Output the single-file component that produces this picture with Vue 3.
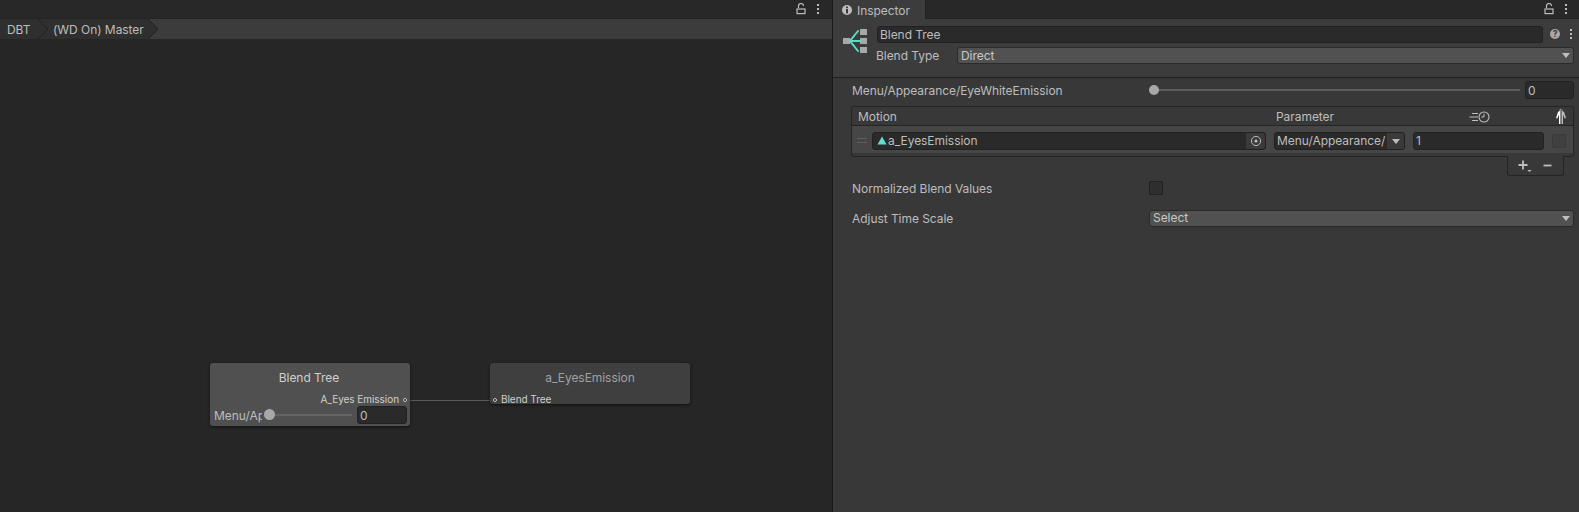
<script setup>
const row = { motion: 'a_EyesEmission', parameter: 'Menu/Appearance/', threshold: '1' }
</script>

<template>
  <div class="app">
    <section class="graph">
      <div class="tabbar">
        <svg width="12" height="12" viewBox="0 0 12 12"><path d="M3.5 5V3a2.5 2.5 0 0 1 5 0" fill="none" stroke="#bdbdbd" stroke-width="1.2"/><rect x="2" y="6" width="8" height="4.600" fill="none" stroke="#bdbdbd" stroke-width="1.2"/></svg>
        <span class="dots"><i></i><i></i><i></i></span>
      </div>
      <div class="crumbs">
        <div class="crumb-list">
          <span class="crumb first">DBT</span>
          <span class="crumb second">(WD On) Master</span>
        </div>
        <svg class="chev c1" width="11" height="20" viewBox="0 0 11 20"><path d="M0 0L10 10L0 20" fill="none" stroke="#1f1f1f"/></svg>
        <svg class="chev c2" width="11" height="20" viewBox="0 0 11 20"><path d="M0 0L10 10L0 20" fill="none" stroke="#1f1f1f"/></svg>
      </div>
      <div class="canvas">
        <div class="wire"></div>
        <div class="node n1">
          <div class="title shifted">Blend Tree</div>
          <div class="port-right">A_Eyes Emission</div>
          <i class="pin p1"></i>
          <div class="node-slider">
            <span class="clip">Menu/Appearance/EyeWhiteEmission</span>
            <div class="n-track"><b class="n-thumb"></b></div>
            <div class="field n-field">0</div>
          </div>
        </div>
        <div class="node n2">
          <div class="title dim">a_EyesEmission</div>
          <div class="port-left">Blend Tree</div>
          <i class="pin p2"></i>
        </div>
      </div>
    </section>

    <section class="inspector">
      <div class="insp-tabs">
        <div class="tab">
          <svg width="12" height="12" viewBox="0 0 12 12"><circle cx="6" cy="6" r="5" fill="#bdbdbd"/><rect x="5" y="5" width="2" height="4.400" fill="#383838"/><rect x="5" y="2.600" width="2" height="1.600" fill="#383838"/></svg>
          <span>Inspector</span>
        </div>
        <div class="tab-tools">
          <svg width="12" height="12" viewBox="0 0 12 12"><path d="M3.5 5V3a2.5 2.5 0 0 1 5 0" fill="none" stroke="#bdbdbd" stroke-width="1.2"/><rect x="2" y="6" width="8" height="4.600" fill="none" stroke="#bdbdbd" stroke-width="1.2"/></svg>
          <span class="dots"><i></i><i></i><i></i></span>
        </div>
      </div>
      <header class="asset">
        <svg class="tree" width="28" height="28" viewBox="0 0 28 28">
          <rect x="1" y="12" width="7" height="6" fill="#a8a8a8"/>
          <rect x="18" y="3" width="7" height="6" fill="#a8a8a8"/>
          <rect x="18" y="12" width="7" height="6" fill="#a8a8a8"/>
          <rect x="18" y="21" width="7" height="6" fill="#a8a8a8"/>
          <path d="M16 5L8 15L16 25M8 15H19" fill="none" stroke="#5cdcc6" stroke-width="2" stroke-linecap="round"/>
        </svg>
        <div class="asset-fields">
          <div class="asset-name">
            <div class="field name">Blend Tree</div>
            <svg class="help" width="12" height="12" viewBox="0 0 12 12"><circle cx="6" cy="6" r="5" fill="#a8a8a8"/><text x="6" y="9" text-anchor="middle" font-size="8.500" font-weight="700" font-family="Inter" fill="#383838">?</text></svg>
            <span class="dots"><i></i><i></i><i></i></span>
          </div>
          <div class="asset-type">
            <span class="type-label">Blend Type</span>
            <div class="drop">Direct<i class="arrow"></i></div>
          </div>
        </div>
      </header>
      <div class="body">
        <div class="prop param">
          <span class="lbl">Menu/Appearance/EyeWhiteEmission</span>
          <div class="track"><b class="thumb"></b></div>
          <div class="field val">0</div>
        </div>

        <div class="table">
          <div class="thead">
            <span class="h-motion">Motion</span>
            <span class="h-param">Parameter</span>
            <svg class="h-time" width="21" height="14" viewBox="0 0 21 14"><path d="M3 3.500h6M.5 7h8.500M3 10.500h6" stroke="#bdbdbd"/><circle cx="15" cy="7" r="5" fill="none" stroke="#bdbdbd" stroke-width="1.100"/><path d="M15 3.800V7H12.400" fill="none" stroke="#bdbdbd"/></svg>
            <svg class="h-man" width="14" height="16" viewBox="0 0 14 16"><path d="M7 .5C6 .5 5.500 1.500 5.800 2.700L4 4L2 10L3.300 10.400L5 6.500V16H7z" fill="#ffffff"/><path d="M7 .5C8 .5 8.500 1.500 8.200 2.700L10 4L12 10L10.700 10.400L9 6.500V16H7z" fill="#c0c0c0"/><path d="M7 0v16" stroke="#1c1c1c"/></svg>
          </div>
          <div class="trow">
            <span class="grip"></span>
            <div class="field motion">
              <svg width="10" height="9" viewBox="0 0 10 9"><path d="M5 .5L9.500 8.500H.5z" fill="#5fe0cc"/></svg>
              <span>{{ row.motion }}</span>
              <span class="pick"><svg width="12" height="12" viewBox="0 0 12 12"><circle cx="6" cy="6" r="4.600" fill="none" stroke="#bdbdbd"/><circle cx="6" cy="6" r="1.600" fill="#bdbdbd"/></svg></span>
            </div>
            <div class="field select"><span>{{ row.parameter }}</span><em><i class="arrow"></i></em></div>
            <div class="field thr">{{ row.threshold }}</div>
            <span class="check small"></span>
          </div>
        </div>
        <div class="footer-wrap">
          <div class="addrem">
            <svg width="14" height="14" viewBox="0 0 14 14"><path d="M5 1.500v9M.5 6h9" stroke="#bdbdbd" stroke-width="1.800"/><path d="M9.500 11h4l-2 2z" fill="#bdbdbd"/></svg>
            <svg width="12" height="14" viewBox="0 0 12 14"><path d="M1.500 6.500h8" stroke="#bdbdbd" stroke-width="1.800"/></svg>
          </div>
        </div>

        <div class="prop norm">
          <span class="lbl">Normalized Blend Values</span>
          <span class="check box"></span>
        </div>
        <div class="prop adjust">
          <span class="lbl">Adjust Time Scale</span>
          <div class="drop wide">Select<i class="arrow"></i></div>
        </div>
      </div>
    </section>
  </div>
</template>

<style>
html, body { margin: 0; background: #262626; overflow: hidden; }
</style>

<style scoped>
.app {
  display: flex; width: 1579px; height: 512px; overflow: hidden;
  font-family: Inter, "Liberation Sans", sans-serif; font-size: 12px; color: #bdbdbd; letter-spacing: -.05px;
}
.graph { width: 832px; display: flex; flex-direction: column; background: #262626; border-right: 1px solid #191919; box-sizing: content-box; }
.tabbar { height: 18px; background: #282828; border-bottom: 1px solid #232323; display: flex; justify-content: flex-end; align-items: center; gap: 10px; padding-right: 12px; }
.dots { display: inline-flex; flex-direction: column; gap: 2px; width: 3px; }
.dots i { width: 2px; height: 2px; background: #bdbdbd; display: block; }
.crumbs { height: 20px; background: #3c3c3c; position: relative; }
.crumb-list { width: 160px; height: 20px; background: #2f2f2f; display: flex; align-items: center; padding-top: 1px; box-sizing: border-box; clip-path: polygon(0 0, 148px 0, 158px 50%, 148px 100%, 0 100%); }
.chev { position: absolute; top: 0; }
.c1 { left: 38px; }
.c2 { left: 148px; }
.crumb { white-space: nowrap; }
.crumb.first { padding-left: 7px; width: 46px; }
.canvas { position: relative; flex: 1; }
.wire { position: absolute; left: 410px; top: 361px; width: 81px; height: 1px; background: #5a5a5a; }
.node { position: absolute; box-sizing: border-box; width: 200px; top: 324px; border-radius: 3px; box-shadow: 0 1px 3px #111; }
.n1 { left: 210px; height: 63px; background: #505050; }
.n2 { left: 490px; height: 41px; background: #3f3f3f; }
.title { text-align: center; line-height: 14px; padding-top: 8px; color: #cfcfcf; }
.title.shifted { padding-right: 2px; }
.title.dim { color: #a0a0a0; }
.port-right, .port-left { position: absolute; top: 30px; font-size: 10px; line-height: 13px; color: #cfcfcf; }
.port-right { right: 11px; }
.port-left { left: 11px; }
.pin { position: absolute; top: 35px; width: 2px; height: 2px; border-radius: 50%; background: #111; border: 1px solid #cfcfcf; box-sizing: content-box; }
.p1 { right: 3px; }
.p2 { left: 3px; }
.node-slider { position: absolute; left: 4px; right: 3px; bottom: 2px; height: 18px; display: flex; align-items: center; }
.clip { width: 48px; overflow: hidden; white-space: nowrap; flex: none; }
.n-track { flex: 1; height: 2px; background: #646464; position: relative; margin: 0 5px 0 2px; }
.n-thumb { position: absolute; left: 0; top: -5px; width: 11px; height: 11px; border-radius: 50%; background: #a8a8a8; }
.field { box-sizing: border-box; background: #2a2a2a; border: 1px solid #212121; border-radius: 3px; display: flex; align-items: center; padding-left: 2px; }
.n-field { width: 50px; height: 18px; flex: none; }
.inspector { flex: 1; background: #383838; display: flex; flex-direction: column; min-width: 0; }
.insp-tabs { height: 19px; background: #282828; display: flex; justify-content: space-between; box-sizing: border-box; border-bottom: 1px solid #232323; }
.tab { width: 93px; height: 19px; background: #3c3c3c; border-right: 1px solid #222; display: flex; align-items: center; gap: 4px; padding: 1px 0 0 8px; box-sizing: border-box; }
.tab-tools { display: flex; align-items: center; gap: 10px; padding-right: 11px; }
.asset { height: 59px; box-sizing: border-box; background: #3c3c3c; border-bottom: 1px solid #1f1f1f; display: flex; padding: 6px 5px 0 9px; }
.tree { margin-top: 1px; flex: none; margin-right: 7px; }
.asset-fields { flex: 1; min-width: 0; }
.asset-name { display: flex; align-items: center; height: 18px; padding-right: 1px; }
.name { flex: 1; }
.help { margin: 0 9px 0 6px; }
.asset-type { display: flex; align-items: center; margin-top: 4px; height: 17px; }
.type-label { width: 81px; flex: none; margin-left: -1px; }
.drop { flex: 1; position: relative; box-sizing: border-box; height: 17px; line-height: 15px; background: #515151; border: 1px solid #2a2a2a; border-radius: 3px; padding-left: 3px; color: #c8c8c8; }
.arrow { display: block; width: 0; height: 0; border-left: 4px solid transparent; border-right: 4px solid transparent; border-top: 5px solid #bdbdbd; }
.drop .arrow { position: absolute; right: 3px; top: 5px; }
.body { flex: 1; padding: 0 5px 0 19px; }
.prop { display: flex; align-items: center; }
.lbl { width: 298px; flex: none; white-space: nowrap; }
.param { height: 18px; margin-top: 3px; }
.track { width: 370px; height: 2px; background: #5e5e5e; position: relative; }
.thumb { position: absolute; left: -1px; top: -4px; width: 10px; height: 10px; border-radius: 50%; background: #a8a8a8; }
.val { width: 49px; height: 18px; margin-left: auto; }
.table { box-sizing: border-box; margin: 7px 0 0 -1px; height: 51px; background: #383838; border: 1px solid #242424; border-radius: 3px; }
.thead { height: 19px; box-sizing: border-box; border-bottom: 1px solid #242424; position: relative; line-height: 19px; }
.h-motion { position: absolute; left: 6px; }
.h-param { position: absolute; left: 424px; }
.h-time { position: absolute; left: 617px; top: 3px; }
.h-man { position: absolute; left: 702px; top: 1px; }
.trow { height: 27px; box-sizing: border-box; background: #464646; display: flex; align-items: flex-start; padding: 6px 0 0 5px; }
.grip { width: 10px; height: 3px; border-top: 1px solid #5f5f5f; border-bottom: 1px solid #5f5f5f; flex: none; margin: 6px 5px 0 0; }
.motion { width: 394px; height: 18px; gap: 1px; position: relative; flex: none; padding: 0 0 1px 4px; }
.pick { position: absolute; right: 0; top: 0; bottom: 0; width: 19px; background: #3a3a3a; border-radius: 0 3px 3px 0; display: flex; align-items: center; justify-content: center; }
.select { width: 131px; height: 18px; margin-left: 8px; flex: none; position: relative; overflow: hidden; white-space: nowrap; padding-bottom: 1px; }
.select em { position: absolute; right: 0; top: 0; bottom: 0; width: 17px; background: #3a3a3a; display: flex; align-items: center; justify-content: center; }
.thr { width: 131px; height: 18px; margin-left: 8px; flex: none; padding-bottom: 1px; }
.check { display: block; box-sizing: border-box; width: 14px; height: 14px; background: #2e2e2e; border: 1px solid #222; border-radius: 2px; }
.check.small { background: #404040; border-color: #3a3a3a; margin: 2px 0 0 8px; }
.check.box { margin-left: -1px; }
.footer-wrap { display: flex; justify-content: flex-end; padding-right: 10px; }
.addrem { box-sizing: border-box; width: 57px; height: 20px; margin-top: -1px; background: #383838; border: 1px solid #242424; border-top: 0; border-radius: 0 0 3px 3px; display: flex; align-items: center; justify-content: center; gap: 10px; }
.norm { margin-top: 5px; height: 14px; }
.adjust { margin-top: 15px; height: 17px; }
.wide { flex: 1; margin-left: -1px; line-height: 14px; }
</style>
